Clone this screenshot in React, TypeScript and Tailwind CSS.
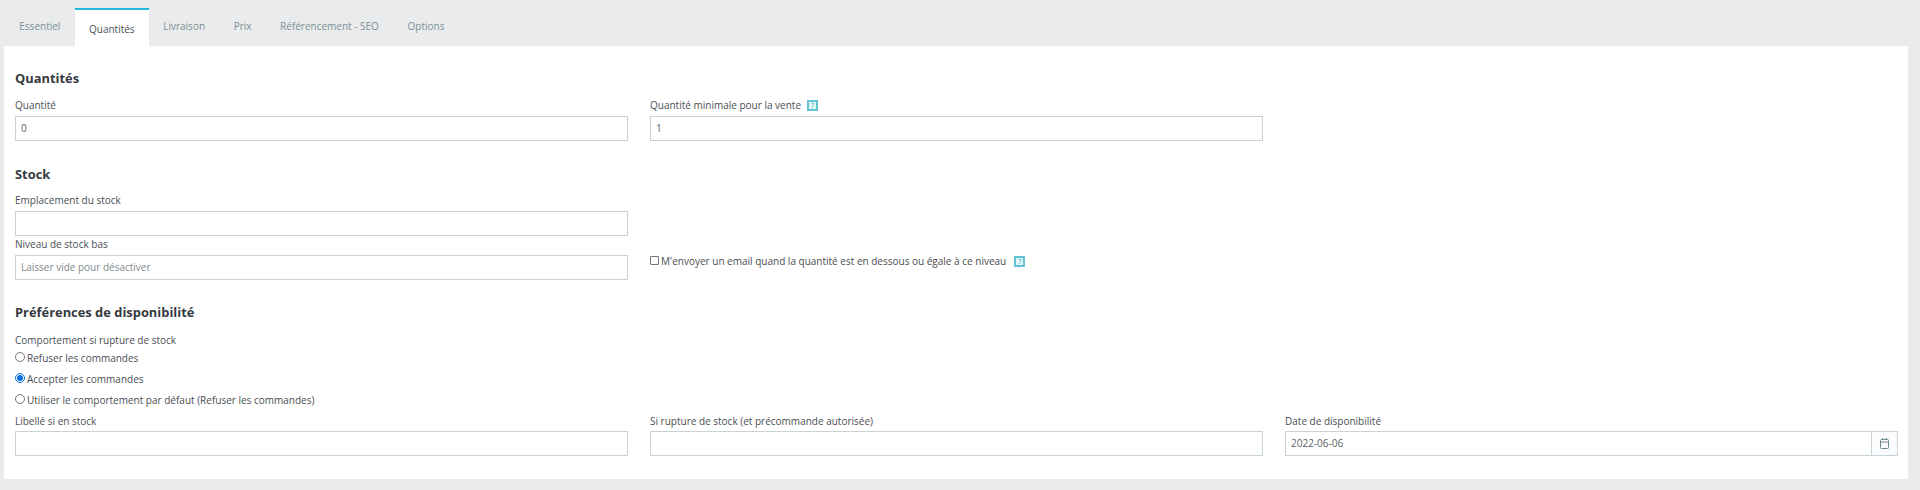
const tabs = ["Essentiel", "Quantités", "Livraison", "Prix", "Référencement - SEO", "Options"]

function HelpBox() {
  return (
    <span className="inline-flex h-[11px] w-[11px] items-center justify-center border-2 border-[#62c3d2] bg-[#e3f5f8] text-[7px] leading-none text-[#25b9d7]">
      ?
    </span>
  )
}

function Label({ children }: { children: React.ReactNode }) {
  return <div className="h-[14px] text-[10px] leading-[14px] text-[#4a4e54]">{children}</div>
}

function TextBox({ value, placeholder }: { value?: string; placeholder?: string }) {
  return (
    <div className="flex h-[25px] items-center border border-[#c7d3d6] bg-white px-[5px] text-[10px]">
      {value && <span className="text-[#5c6165]">{value}</span>}
      {placeholder && <span className="text-[#7f888c]">{placeholder}</span>}
    </div>
  )
}

function Radio({ label, checked }: { label: string; checked?: boolean }) {
  return (
    <div className="flex h-[21px] items-center gap-[2px] text-[10px] text-[#4a4e54]">
      <span
        className={
          checked
            ? "mb-[3px] flex h-[10px] w-[10px] items-center justify-center rounded-full border border-[#0b6fdc] bg-white"
            : "mb-[3px] h-[10px] w-[10px] rounded-full border border-[#767676] bg-white"
        }
      >
        {checked && <span className="h-[6px] w-[6px] rounded-full bg-[#0b6fdc]" />}
      </span>
      <span>{label}</span>
    </div>
  )
}

export default function App() {
  return (
    <div className="h-[490px] w-[1920px] overflow-hidden bg-[#eaebec] font-['Open_Sans',sans-serif]">
      {/* Tabs */}
      <div className="flex h-[46px] items-end pl-[5px]">
        {tabs.map((tab) =>
          tab === "Quantités" ? (
            <div
              key={tab}
              className="flex h-[38px] items-center border-t-2 border-[#25b9d7] bg-white px-[14.3px] pt-[2px] text-[10px] text-[#4a4e54]"
            >
              {tab}
            </div>
          ) : (
            <div key={tab} className="flex h-[38px] items-center px-[14.3px] pb-[2px] text-[10px] text-[#7a9097]">
              {tab}
            </div>
          ),
        )}
      </div>

      {/* Card */}
      <div className="ml-[4px] h-[433px] w-[1904px] bg-white px-[11px] pt-[23px]">
        <h2 className="h-[18px] text-[12.9px] leading-[18px] font-bold text-[#363a41]">Quantités</h2>
        <div className="mt-[11px] grid grid-cols-[613px_613px] gap-x-[22px]">
          <div>
            <Label>Quantité</Label>
            <div className="mt-[4px]">
              <TextBox value="0" />
            </div>
          </div>
          <div>
            <Label>
              <span className="flex items-center gap-[6px]">
                Quantité minimale pour la vente <HelpBox />
              </span>
            </Label>
            <div className="mt-[4px]">
              <TextBox value="1" />
            </div>
          </div>
        </div>

        <h2 className="mt-[24px] h-[18px] text-[12.9px] leading-[18px] font-bold text-[#363a41]">Stock</h2>
        <div className="mt-[10px] w-[613px]">
          <Label>Emplacement du stock</Label>
          <div className="mt-[4px]">
            <TextBox />
          </div>
        </div>
        <div className="mt-[1px] grid grid-cols-[613px_613px] gap-x-[22px]">
          <div>
            <Label>Niveau de stock bas</Label>
            <div className="mt-[4px]">
              <TextBox placeholder="Laisser vide pour désactiver" />
            </div>
          </div>
          <div className="flex items-center gap-[2px] pt-[6px] text-[10px] text-[#4a4e54]">
            <span className="mb-[2px] h-[9px] w-[9px] rounded-[1px] border border-[#767676] bg-white" />
            <span className="mr-[6px]">M'envoyer un email quand la quantité est en dessous ou égale à ce niveau</span>
            <HelpBox />
          </div>
        </div>

        <h2 className="mt-[23px] h-[18px] text-[12.9px] leading-[18px] font-bold text-[#363a41]">
          Préférences de disponibilité
        </h2>
        <div className="mt-[12px]">
          <Label>Comportement si rupture de stock</Label>
          <div className="mt-[1px]">
            <Radio label="Refuser les commandes" />
            <Radio label="Accepter les commandes" checked />
            <Radio label="Utiliser le comportement par défaut (Refuser les commandes)" />
          </div>
        </div>
        <div className="mt-[3px] grid grid-cols-[613px_613px_613px] gap-x-[22px]">
          <div>
            <Label>Libellé si en stock</Label>
            <div className="mt-[3px]">
              <TextBox />
            </div>
          </div>
          <div>
            <Label>Si rupture de stock (et précommande autorisée)</Label>
            <div className="mt-[3px]">
              <TextBox />
            </div>
          </div>
          <div>
            <Label>Date de disponibilité</Label>
            <div className="mt-[3px] flex">
              <div className="flex-1">
                <TextBox value="2022-06-06" />
              </div>
              <div className="flex h-[25px] w-[26px] items-center justify-center border border-l-0 border-[#c7d3d6] bg-[#fafbfc] text-[#6c868e]">
                <svg width="9" height="11" viewBox="0 0 9 11" fill="none" stroke="currentColor">
                  <rect x="0.5" y="1.5" width="8" height="9" rx="1" />
                  <path d="M0.5 4h8M2.5 0v2M6.5 0v2" />
                </svg>
              </div>
            </div>
          </div>
        </div>
      </div>
    </div>
  )
}
